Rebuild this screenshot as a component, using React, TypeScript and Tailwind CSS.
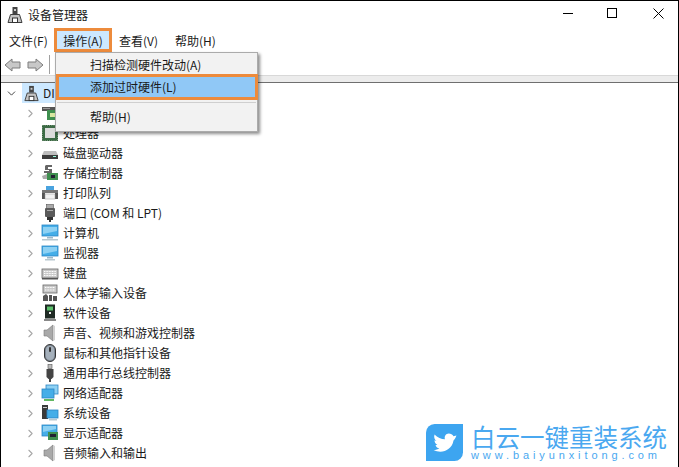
import React from "react";
import { ChevronRight, ChevronDown } from "lucide-react";

const Computer = () => (
  <svg width="18" height="18" viewBox="0 0 18 18">
    <rect x="6.5" y="1" width="5" height="7" fill="#444" />
    <rect x="8" y="3" width="2" height="2" fill="#ccc" />
    <path d="M4.5 8.5h9l2.5 8H2z" fill="#c4c4c4" stroke="#3f3f3f" />
    <rect x="6.5" y="12" width="5" height="4.5" fill="#fff" stroke="#333" />
  </svg>
);
const Nic = () => (
  <svg width="18" height="18" viewBox="0 0 18 18">
    <rect x="1" y="3" width="16" height="4" fill="#555" />
    <rect x="2" y="4" width="7" height="1" fill="#999" />
    <rect x="6" y="6" width="11" height="10" fill="#3f8f4f" />
    <rect x="9" y="9" width="5" height="4" fill="#d8e8a0" />
  </svg>
);
const Cpu = () => (
  <svg width="18" height="18" viewBox="0 0 18 18">
    <rect x="1.5" y="1.5" width="15" height="15" fill="#3d6b46" stroke="#2d5a36" />
    <rect x="1.5" y="1.5" width="15" height="15" fill="none" stroke="#a8c4a8" strokeWidth=".7" strokeDasharray="1 1.2" />
    <rect x="4" y="4" width="10" height="10" fill="#dcdcdc" />
  </svg>
);
const Disk = () => (
  <svg width="18" height="18" viewBox="0 0 18 18">
    <path d="M3 7h12l2 4H1z" fill="#bdbdbd" />
    <rect x="1" y="11" width="16" height="4" fill="#3c3c3c" />
    <rect x="12" y="12" width="3" height="1" fill="#9fd" />
  </svg>
);
const Storage = () => (
  <svg width="18" height="18" viewBox="0 0 18 18">
    <path d="M5 1h6v2H7v2h4v4H3V7h5V6H4V2z" fill="#666" />
    <path d="M1 12l5-2v5H2z" fill="#aaa" />
    <rect x="6" y="9" width="11" height="7" fill="#3f8f4f" />
    <rect x="10" y="11" width="4" height="3" fill="#223" />
  </svg>
);
const Printer = () => (
  <svg width="18" height="18" viewBox="0 0 18 18">
    <rect x="5" y="2" width="8" height="5" fill="#4aa3df" />
    <rect x="1" y="6" width="16" height="3" fill="#777" />
    <rect x="1" y="9" width="3" height="6" fill="#555" />
    <rect x="14" y="9" width="3" height="6" fill="#555" />
    <rect x="4" y="10" width="10" height="5" fill="#f2f2f2" stroke="#999" strokeWidth=".5" />
  </svg>
);
const Port = () => (
  <svg width="18" height="18" viewBox="0 0 18 18">
    <rect x="5.5" y="0.5" width="7" height="4" fill="#aaa" stroke="#555" strokeWidth=".6" />
    <rect x="4" y="4" width="10" height="9" rx="1" fill="#5a5a5a" />
    <rect x="6" y="13" width="6" height="3" fill="#333" />
    <rect x="8" y="15" width="2" height="3" fill="#333" />
    <rect x="6" y="6" width="6" height="1" fill="#aaa" />
  </svg>
);
const Monitor = ({ tall }: { tall?: boolean }) => (
  <svg width="18" height="18" viewBox="0 0 18 18">
    <rect x="1" y={tall ? 1 : 2} width="16" height={tall ? 11 : 10} fill="#45aee8" stroke="#2c86c4" strokeWidth=".8" />
    <path d="M2 3h14v4L2 10z" fill="#8ed1f3" />
    <rect x="6" y="13" width="6" height="1.5" fill="#9cb8c8" />
    <rect x={tall ? 1 : 4} y="15" width={tall ? 16 : 10} height="1.5" fill="#b8c8d0" />
  </svg>
);
const Keyboard = () => (
  <svg width="18" height="18" viewBox="0 0 18 18">
    <rect x="1" y="5" width="16" height="9" fill="#c9c9c9" stroke="#666" strokeWidth=".8" />
    <path d="M3 7.5h12M3 9.5h12M3 11.5h12" stroke="#fff" strokeWidth="1" strokeDasharray="1 .6" />
    <rect x="1" y="14" width="16" height="1.5" fill="#555" />
  </svg>
);
const Hid = () => (
  <svg width="18" height="18" viewBox="0 0 18 18">
    <rect x="2" y="1" width="14" height="8" fill="#c9c9c9" stroke="#666" strokeWidth=".8" />
    <path d="M4 3.5h10M4 6h10" stroke="#fff" strokeDasharray="1 .6" />
    <path d="M2 17v-5l3-2 2 2v5zM8 17v-6h3v6zM12 17v-5h4v5z" fill="#555" />
  </svg>
);
const Software = () => (
  <svg width="18" height="18" viewBox="0 0 18 18">
    <rect x="4" y="0.5" width="10" height="14" fill="#1f2a24" />
    <rect x="6" y="2.5" width="6" height="4" fill="#5bbf6a" />
    <rect x="8" y="8" width="2" height="2" fill="#eee" />
    <rect x="3" y="15" width="12" height="2" fill="#888" />
  </svg>
);
const Speaker = () => (
  <svg width="18" height="18" viewBox="0 0 18 18">
    <path d="M3 6h3l6-5v16l-6-5H3z" fill="#a9a9a9" stroke="#7a7a7a" strokeWidth=".6" />
    <path d="M12 1v16l2-1V2z" fill="#d0d0d0" />
  </svg>
);
const Mouse = () => (
  <svg width="18" height="18" viewBox="0 0 18 18">
    <rect x="3.5" y="0.5" width="11" height="17" rx="5.5" fill="#7f8a96" stroke="#333" />
    <rect x="5" y="2" width="8" height="14" rx="4" fill="#a5b0bb" />
    <rect x="8" y="3" width="2" height="5" rx="1" fill="#333" />
  </svg>
);
const Usb = () => (
  <svg width="18" height="18" viewBox="0 0 18 18">
    <rect x="7" y="0.5" width="4" height="4" fill="#bbb" stroke="#555" strokeWidth=".6" />
    <path d="M5.5 5h7v8l-2 2h-3l-2-2z" fill="#444" />
    <rect x="8" y="15" width="2" height="3" fill="#444" />
  </svg>
);
const Network = () => (
  <svg width="18" height="18" viewBox="0 0 18 18">
    <rect x="5" y="1" width="12" height="9" fill="#8ed1f3" stroke="#2c86c4" strokeWidth=".8" />
    <rect x="1" y="5" width="12" height="9" fill="#45aee8" stroke="#2c86c4" strokeWidth=".8" />
    <path d="M3 15h10v2H3z" fill="#62b862" />
  </svg>
);
const SystemDev = () => (
  <svg width="18" height="18" viewBox="0 0 18 18">
    <rect x="1" y="1" width="6" height="14" fill="#3a3a3a" />
    <rect x="2" y="3" width="4" height="1" fill="#ccc" />
    <rect x="6" y="6" width="11" height="8" fill="#45aee8" stroke="#2c86c4" strokeWidth=".8" />
    <rect x="8" y="15" width="8" height="1.5" fill="#b8c8d0" />
  </svg>
);
const Display = () => (
  <svg width="18" height="18" viewBox="0 0 18 18">
    <rect x="1" y="1" width="15" height="11" fill="#45aee8" stroke="#2c86c4" strokeWidth=".8" />
    <path d="M2 2h13v3L2 8z" fill="#8ed1f3" />
    <rect x="7" y="8" width="10" height="8" fill="#3f8f4f" />
    <rect x="9" y="10" width="6" height="3" fill="#223" />
  </svg>
);

const rows: [React.ReactNode, string][] = [
  [<Nic />, ""],
  [<Cpu />, "处理器"],
  [<Disk />, "磁盘驱动器"],
  [<Storage />, "存储控制器"],
  [<Printer />, "打印队列"],
  [<Port />, "端口 (COM 和 LPT)"],
  [<Monitor tall />, "计算机"],
  [<Monitor />, "监视器"],
  [<Keyboard />, "键盘"],
  [<Hid />, "人体学输入设备"],
  [<Software />, "软件设备"],
  [<Speaker />, "声音、视频和游戏控制器"],
  [<Mouse />, "鼠标和其他指针设备"],
  [<Usb />, "通用串行总线控制器"],
  [<Network />, "网络适配器"],
  [<SystemDev />, "系统设备"],
  [<Display />, "显示适配器"],
  [<Speaker />, "音频输入和输出"],
];

export default function App() {
  return (
    <div
      className="relative w-[679px] h-[467px] overflow-hidden bg-white border-l border-t border-r border-black text-[12px] text-[#1a1a1a]"
      style={{ fontFamily: '"Noto Sans CJK SC", "Liberation Sans", sans-serif' }}
    >
      <div className="flex items-center h-[27px] pl-[5px]">
        <Computer />
        <span className="ml-[4px] leading-none">设备管理器</span>
        <div className="ml-auto flex items-center h-full pb-[3px]">
          <div className="w-[37px] flex justify-center"><div className="w-[10px] h-px bg-black" /></div>
          <div className="w-[52px] flex justify-center"><div className="w-[10px] h-[10px] border border-black" /></div>
          <div className="w-[40px] flex justify-center">
            <svg width="11" height="11" viewBox="0 0 11 11"><path d="M.5.5l10 10M10.5.5l-10 10" stroke="#000" fill="none" /></svg>
          </div>
        </div>
      </div>

      <div className="flex items-center h-[24px] pl-[8px]">
        <span className="w-[45px] h-[24px] flex items-center pt-[2px]">文件(F)</span>
        <span className="w-[58px] h-[24px] flex items-center justify-center pt-[1px] bg-[#cce8ff] border-[3px] border-[#ed8b3c]">操作(A)</span>
        <span className="ml-[7px] w-[56px] h-[24px] flex items-center pt-[2px]">查看(V)</span>
        <span className="h-[24px] flex items-center pt-[2px]">帮助(H)</span>
      </div>

      <div className="flex items-start h-[23px] pl-[3px] pt-[6px]">
        <svg width="17" height="14" viewBox="0 0 17 14"><path d="M1 7l7-6v3h8v6H8v3z" fill="#c8c8c8" stroke="#7c7c7c" /></svg>
        <svg className="ml-[6px]" width="17" height="14" viewBox="0 0 17 14"><path d="M16 7L9 1v3H1v6h8v3z" fill="#c8c8c8" stroke="#7c7c7c" /></svg>
        <div className="ml-[5px] -mt-[3px] w-px h-[19px] bg-[#a0a0a0]" />
      </div>

      <div className="h-[8px] bg-[#ececec] border-t border-[#d8d8d8] border-b border-b-[#6f6f6f]" />

      <div className="pl-[7px]">
        <div className="flex items-center h-[20px] -ml-[3px]">
          <ChevronDown size={13} strokeWidth={1.8} className="text-[#444]" />
          <div className="ml-[4px] flex items-center h-[20px] w-[60px] bg-[#cce8ff] pl-[1px] gap-[3px] [&>svg]:w-[17px] [&>svg]:h-[17px]">
            <Computer />
            <span>DI</span>
          </div>
        </div>
        {rows.map(([icon, label], i) => (
          <div key={i} className="flex items-center h-[20px] pl-[16px]">
            <ChevronRight size={13} strokeWidth={2} className="text-[#a8a8a8]" />
            <span className="ml-[5px] w-[16px] flex justify-center [&>svg]:shrink-0">{icon}</span>
            <span className="ml-[5px] whitespace-pre">{label}</span>
          </div>
        ))}
      </div>

      <div className="absolute left-[54px] top-[51px] w-[203px] h-[80px] bg-[#f2f2f2] border border-[#ababab] shadow-[2px_2px_3px_rgba(0,0,0,0.45)]">
        <div className="h-[21px] pl-[34px] pt-[2px] flex items-center">扫描检测硬件改动(A)</div>
        <div className="h-[26px] pl-[31px] flex items-center bg-[#90c8f6] border-[3px] border-[#ed8b3c] -mr-px">添加过时硬件(L)</div>
        <div className="h-px bg-[#cfcfcf] mt-[2px] mx-px" />
        <div className="h-[20px] pl-[34px] mt-[4px] flex items-center">帮助(H)</div>
      </div>

      <div className="absolute left-[425px] top-[423px] flex items-start gap-[8px] text-[#4aa8f0]">
        <svg width="37" height="37" viewBox="0 0 39 39">
          <path d="M9 0h30v30a9 9 0 0 1-9 9H0V9a9 9 0 0 1 9-9z" fill="#3da5f0" />
          <path d="M32 12l-3 1c-1-2-3-3-5-3-3 0-5 3-4 6-4 0-8-2-11-5-1 3 0 5 2 7l-2-1c0 2 1 4 3 5l-2 .5c1 2 2 3 4 3-1 1-4 2-6 2 8 4 19 1 21-10 1-1 2-2 3-5z" fill="#fff" />
        </svg>
        <div className="flex flex-col">
          <span className="text-[24.5px] leading-[25px] whitespace-nowrap">白云一键重装系统</span>
          <span className="text-[11px] leading-[12px] tracking-[3.9px] whitespace-nowrap" style={{ fontFamily: '"Liberation Sans", sans-serif' }}>www.baiyunxitong.com</span>
        </div>
      </div>
    </div>
  );
}
